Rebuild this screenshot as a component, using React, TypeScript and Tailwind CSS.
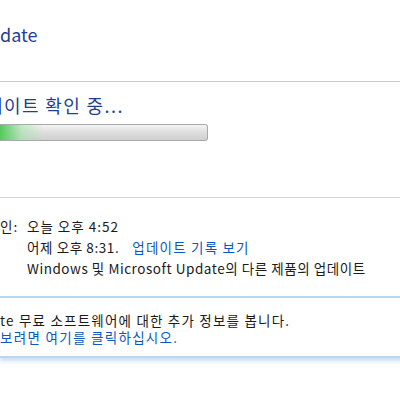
export default function App() {
  const font = { fontFamily: '"Noto Sans CJK KR", "Noto Sans", sans-serif' };
  return (
    <div className="w-[400px] h-[400px] bg-white overflow-hidden text-[#1a1a1a]" style={font}>
      <div className="h-[81px] pt-[22px]">
        <div className="text-[18px] leading-[24px] text-[#1f3f93] whitespace-nowrap">date</div>
      </div>
      <div className="h-px bg-[#cacaca]" />
      <div className="h-[115px] pt-[11px]">
        <div className="text-[18px] leading-[24px] text-[#1f3f93] whitespace-nowrap ml-[-32px] tracking-[1.4px]">업데이트 확인 중...</div>
        <div className="mt-[7px] w-[208px] h-[17px] rounded-r-[3px] border border-l-0 border-[#a9a9a9] bg-gradient-to-b from-[#f4f4f4] via-[#dedede] to-[#cfcfcf] relative overflow-hidden">
          <div className="absolute left-0 top-0 bottom-0 w-[44px] bg-gradient-to-r from-[#52c95a] via-[#a6e3aa]/60 to-transparent" />
        </div>
      </div>
      <div className="h-px bg-[#d4d4d4]" />
      <div className="pt-[18px] text-[13.5px] leading-[21px]">
        <div className="flex">
          <div className="w-[27px] shrink-0 tracking-[1px]">인:</div>
          <div className="tracking-[1px]">오늘 오후 4:52</div>
        </div>
        <div className="flex">
          <div className="w-[27px] shrink-0" />
          <div className="flex gap-[13px] whitespace-nowrap">
            <span className="tracking-[0.6px]">어제 오후 8:31.</span>
            <span className="text-[#0a58c4] tracking-[1.2px]">업데이트 기록 보기</span>
          </div>
        </div>
        <div className="flex">
          <div className="w-[27px] shrink-0" />
          <div className="whitespace-nowrap tracking-[0.55px]">Windows 및 Microsoft Update의 다른 제품의 업데이트</div>
        </div>
      </div>
      <div className="mt-[17px] w-[410px] h-[62px] border-y-2 border-[#b9d7f5] shadow-[0_3px_4px_rgba(150,190,235,0.5)] pt-[14px] text-[13.5px] leading-[17px]">
        <div className="whitespace-nowrap tracking-[1.2px]">te 무료 소프트웨어에 대한 추가 정보를 봅니다.</div>
        <div className="whitespace-nowrap text-[#0a58c4] tracking-[1.3px]">보려면 여기를 클릭하십시오.</div>
      </div>
    </div>
  );
}
